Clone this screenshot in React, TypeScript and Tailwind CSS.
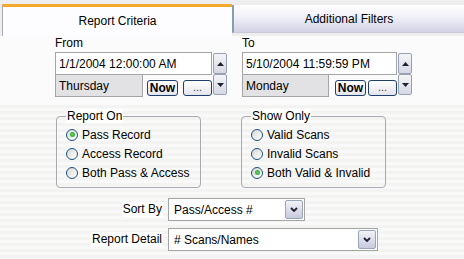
import React from "react";

function SpinBtn({ down }: { down?: boolean }) {
  return (
    <div className="flex h-[21px] w-[14px] items-center justify-center rounded-[2px] border border-[#9aa0b4] bg-[linear-gradient(180deg,#f4f4f8,#d6d8e4)]">
      <svg width="7" height="4" viewBox="0 0 7 4">
        {down ? <path d="M0 0h7L3.5 4z" fill="#202030" /> : <path d="M0 4h7L3.5 0z" fill="#202030" />}
      </svg>
    </div>
  );
}

function DateBox({ value, day, w, dayW, gapNow }: { value: string; day: string; w: number; dayW: number; gapNow: number }) {
  return (
    <div className="flex">
      <div className="flex flex-col" style={{ width: w }}>
        <div className="flex h-[23px] items-center border border-[#a5a5a5] bg-white pl-[3px] text-[12px] text-black">
          {value}
        </div>
        <div className="flex h-[22px] items-end">
          <div
            className="flex h-[22px] items-center border border-t-0 border-[#a5a5a5] bg-[#e2e2e4] pl-[3px] text-[12px]"
            style={{ width: dayW }}
          >
            {day}
          </div>
          <div className="flex flex-1 items-end justify-between pb-[1px]" style={{ paddingLeft: gapNow }}>
            <div className="flex h-[16px] w-[31px] items-center justify-center rounded-[3px] border border-[#1c3f70] bg-[linear-gradient(180deg,#ffffff,#e4e4ec)] text-[12px] font-bold leading-none">
              Now
            </div>
            <div className="flex h-[16px] w-[29px] items-end justify-center rounded-[3px] border border-[#1c3f70] bg-[linear-gradient(180deg,#ffffff,#e4e4ec)] pb-[2px] text-[11px] leading-none text-[#404040]">
              ...
            </div>
          </div>
        </div>
      </div>
      <div className="ml-[1px] flex flex-col pt-[1px]">
        <SpinBtn />
        <SpinBtn down />
      </div>
    </div>
  );
}

function Radio({ checked, label }: { checked?: boolean; label: string }) {
  return (
    <div className="flex h-[19px] items-center">
      <div className="flex h-[12px] w-[12px] items-center justify-center rounded-full border border-[#1c5180] bg-[linear-gradient(135deg,#d8d8d2,#ffffff)]">
        {checked && <div className="h-[5px] w-[5px] rounded-full bg-[radial-gradient(circle,#6ad06a,#1a9a1a)]" />}
      </div>
      <span className="ml-[4px] text-[12px]">{label}</span>
    </div>
  );
}

function Group({ title, children }: { title: string; children: React.ReactNode }) {
  return (
    <div className="relative h-[72px] w-[145px] rounded-[4px] border border-[#a9a9b0] pl-[9px] pt-[8px]">
      <span className="absolute left-[9px] top-[-8px] bg-white px-[1px] text-[12px] leading-[14px]">{title}</span>
      {children}
    </div>
  );
}

function Select({ value, w }: { value: string; w: number }) {
  return (
    <div className="flex h-[23px] items-center justify-between border border-[#a5a5a5] bg-white pl-[5px] pr-[1px] text-[12px]" style={{ width: w }}>
      <span>{value}</span>
      <div className="flex h-[19px] w-[18px] items-center justify-center rounded-[2px] border border-[#9aa4b8] bg-[linear-gradient(180deg,#f2f2f8,#c8cade)]">
        <svg width="8" height="5" viewBox="0 0 8 5">
          <path d="M1 1l3 3 3-3" stroke="#202030" strokeWidth="1.8" fill="none" />
        </svg>
      </div>
    </div>
  );
}

export default function App() {
  return (
    <div className="h-[259px] w-[464px] overflow-hidden bg-[repeating-linear-gradient(180deg,#f9f9f9_0px,#f9f9f9_3px,#f3f3f1_3px,#f3f3f1_6px)] font-[family-name:'Liberation_Sans',Arial,sans-serif] text-[12px] text-black">
      <div className="flex h-[36px] bg-[#eeeeee] pt-[4px] pl-[2px]">
        <div className="flex h-[32px] w-[230px] items-center justify-center border-l border-t-[3px] border-l-[#a8a8b0] border-t-[#f4a82c] bg-[#fdfdff] pb-[2px] text-[12px]">
          Report Criteria
        </div>
        <div className="mt-[1px] flex h-[28px] flex-1 items-center justify-center border-l-2 border-b border-l-[#86a0b0] border-b-[#c8c8d8] bg-[linear-gradient(180deg,#ffffff,#f0f0f8_45%,#d2d2e4)] text-[12px]">
          Additional Filters
        </div>
      </div>
      <div className="flex bg-[#fbfbfc] pl-[55px] pb-[8px]">
        <div className="flex flex-col">
          <div className="h-[16px] leading-[14px]">From</div>
          <DateBox value="1/1/2004 12:00:00 AM" day="Thursday" w={157} dayW={88} gapNow={4} />
        </div>
        <div className="ml-[15px] flex flex-col">
          <div className="h-[16px] leading-[14px]">To</div>
          <DateBox value="5/10/2004 11:59:59 PM" day="Monday" w={155} dayW={87} gapNow={6} />
        </div>
      </div>
      <div className="mt-[11px] flex pl-[56px]">
        <Group title="Report On">
          <Radio checked label="Pass Record" />
          <Radio label="Access Record" />
          <Radio label="Both Pass & Access" />
        </Group>
        <div className="ml-[40px]">
          <Group title="Show Only">
            <Radio label="Valid Scans" />
            <Radio label="Invalid Scans" />
            <Radio checked label="Both Valid & Invalid" />
          </Group>
        </div>
      </div>
      <div className="mt-[10px] flex flex-col gap-[7px]">
        <div className="flex items-center">
          <div className="flex w-[163px] justify-end">
            <span className="bg-white pl-[1px] pr-[1px] leading-[15px]">Sort By</span>
          </div>
          <div className="ml-[5px]">
            <Select value="Pass/Access #" w={137} />
          </div>
        </div>
        <div className="flex items-center">
          <div className="flex w-[163px] justify-end">
            <span className="bg-white pl-[1px] pr-[1px] leading-[15px]">Report Detail</span>
          </div>
          <div className="ml-[5px]">
            <Select value="# Scans/Names" w={210} />
          </div>
        </div>
      </div>
    </div>
  );
}
